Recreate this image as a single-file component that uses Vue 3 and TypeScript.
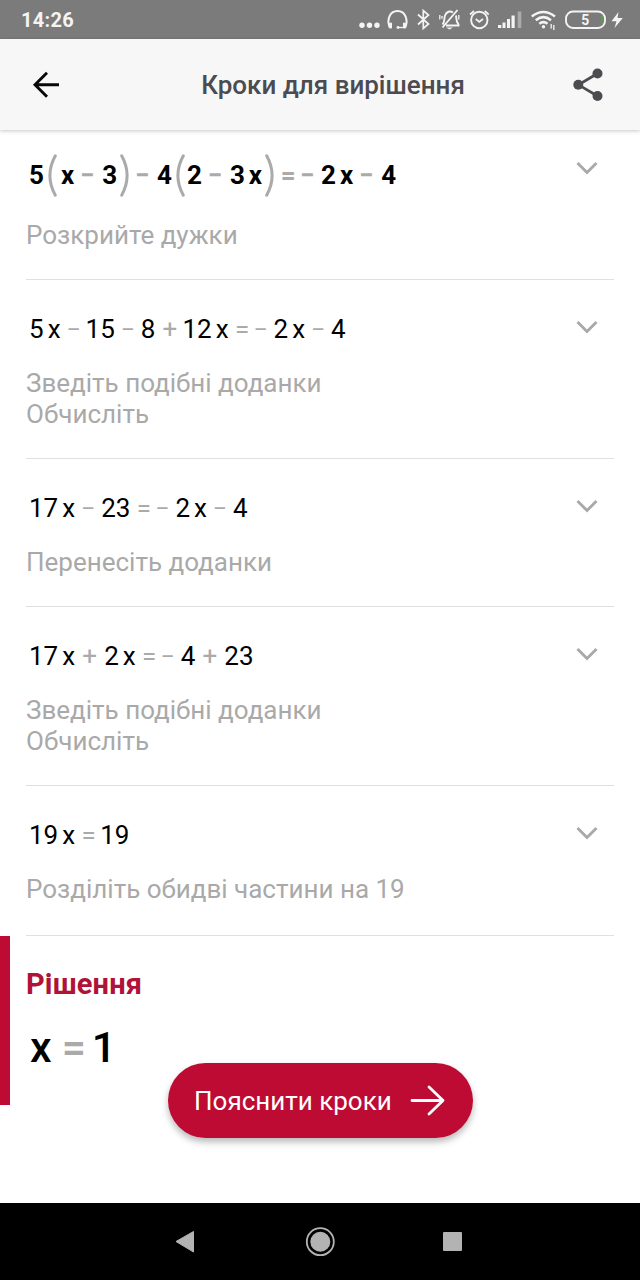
<script setup lang="ts">
type Kind = 'num' | 'var' | 'op' | 'open' | 'close'
interface Token {
  kind: Kind
  text: string
}
interface Step {
  tokens: Token[]
  notes: string[]
  strong?: boolean
}

function parse(source: string): Token[] {
  return source.split(' ').map((text): Token => {
    if (text === '(') return { kind: 'open', text }
    if (text === ')') return { kind: 'close', text }
    if (text === 'x') return { kind: 'var', text }
    if (/^\d+$/.test(text)) return { kind: 'num', text }
    return { kind: 'op', text }
  })
}

const steps: Step[] = [
  { tokens: parse('5 ( x − 3 ) − 4 ( 2 − 3 x ) = − 2 x − 4'), notes: ['Розкрийте дужки'], strong: true },
  { tokens: parse('5 x − 15 − 8 + 12 x = − 2 x − 4'), notes: ['Зведіть подібні доданки', 'Обчисліть'] },
  { tokens: parse('17 x − 23 = − 2 x − 4'), notes: ['Перенесіть доданки'] },
  { tokens: parse('17 x + 2 x = − 4 + 23'), notes: ['Зведіть подібні доданки', 'Обчисліть'] },
  { tokens: parse('19 x = 19'), notes: ['Розділіть обидві частини на 19'] },
]
</script>

<template>
  <div class="screen">
    <div class="status">
      <span class="clock">14:26</span>
      <svg class="indicators" width="290" height="39" viewBox="350 0 290 39" fill="none" stroke="#f4f4f4">
        <g fill="#f4f4f4" stroke="none">
          <circle cx="362" cy="25.3" r="2.7" />
          <circle cx="369.5" cy="25.3" r="2.7" />
          <circle cx="377" cy="25.3" r="2.7" />
        </g>
        <path d="M391 26.5H389.5C387 21 389 11 397.5 11S408 21 405.500 26.500H404" stroke-width="2" />
        <path d="M388.500 23.500L391.500 23V28H389.500ZM406.500 23.500L403.500 23V28H405.500Z" fill="#f4f4f4" stroke-width="1" />
        <circle cx="398" cy="27.500" r="1.400" fill="#f4f4f4" stroke="none" />
        <path d="M398 27.500H404" stroke-width="1.300" />
        <path d="M418 14.500L428.500 24L423.300 28.500V10.500L428.500 15L418 24.500" stroke-width="1.700" />
        <path d="M442.500 24.500C445 22 444 18 445 15.500C446.500 11.500 450 10.500 453 12.500M456 15.500C456.500 19 456 22 458.500 24.500V25.500H446M457.500 10L442.500 27.500" stroke-width="1.900" />
        <path d="M446 27.500H453L449.500 29.500Z" fill="#f4f4f4" stroke="none" />
        <path d="M439.800 15V19.500M442 16V18.800M458.800 15V19.500" stroke-width="1.300" />
        <circle cx="479.300" cy="20" r="8.200" stroke-width="1.900" />
        <path d="M475.800 19L479.300 21.800L483 19M470 14.500L474 11M488.700 14.500L484.700 11" stroke-width="1.700" />
        <g fill="#f4f4f4" stroke="none">
          <rect x="498" y="25" width="3.300" height="3" />
          <rect x="502.500" y="22.500" width="3" height="5.500" />
          <rect x="507" y="19" width="3" height="9" />
          <rect x="511.500" y="15.500" width="3.200" height="12.500" />
          <rect x="517.700" y="11.500" width="3.600" height="16.500" opacity=".4" />
        </g>
        <path d="M531.800 16.500Q543.300 7.500 555 16.500M535.800 20.300Q543.300 14 551 20.300M539.300 23.800Q543.300 20.500 547.500 23.800" stroke-width="2.500" />
        <circle cx="543.500" cy="26.800" r="1.700" fill="#f4f4f4" stroke="none" />
        <path d="M551.200 24V28.500M553.800 25V30" stroke-width="1.300" />
        <rect x="566" y="11.500" width="39" height="16.500" rx="7" stroke-width="1.900" />
        <path d="M601.800 15.500V24.500" stroke="#5f9a50" stroke-width="1.900" />
        <text class="charge" x="585.300" y="25" text-anchor="middle">5</text>
        <path d="M618.500 12L611.500 21.300H616.500L614.500 28L622.800 18H617.500Z" fill="#f4f4f4" stroke="none" />
      </svg>
    </div>

    <header class="appbar">
      <svg class="back" width="32" height="32" viewBox="30 69 32 32" fill="none" stroke="#080808" stroke-width="2.900">
        <path d="M59 84.800H35M47 72.800L35 84.800L47 96.800" />
      </svg>
      <h1>Кроки для вирішення</h1>
      <svg class="share" width="32" height="36" viewBox="572 67 32 36" fill="#4b4b50">
        <path d="M597.500 73.500L578.500 84.800L597.500 96" fill="none" stroke="#4b4b50" stroke-width="2.700" />
        <circle cx="578.300" cy="84.800" r="5" />
        <circle cx="597.500" cy="73.500" r="5" />
        <circle cx="597.500" cy="96" r="5" />
      </svg>
    </header>

    <main>
      <section v-for="(step, i) in steps" :key="i" class="step" :class="{ strong: step.strong }">
        <div class="equation">
          <template v-for="(token, t) in step.tokens" :key="t">
            <svg v-if="token.kind === 'open' || token.kind === 'close'" :class="token.kind" width="9" height="43" viewBox="0 0 9 43" fill="none" stroke="#aaa" stroke-width="3" stroke-linecap="round">
              <path v-if="token.kind === 'open'" d="M7.300 1.800Q-3.500 21.500 7.300 41.200" />
              <path v-else d="M1.700 1.800Q12.500 21.500 1.700 41.200" />
            </svg>
            <span v-else :class="[token.kind, { plus: token.text === '+', minus: token.text === '−', narrow: token.text.startsWith('1') }]">{{ token.text }}</span>
          </template>
        </div>
        <p class="notes">
          <span v-for="note in step.notes" :key="note">{{ note }}</span>
        </p>
        <svg class="chevron" width="24" height="16" viewBox="0 0 24 16" fill="none" stroke="#a9a9a9" stroke-width="2.900">
          <path d="M2.500 3L12 12.500L21.500 3" />
        </svg>
      </section>

      <section class="solution">
        <h2>Рішення</h2>
        <div class="answer"><span>x</span><span class="equals">=</span><span>1</span></div>
      </section>
      <button class="explain" type="button">
        <span>Пояснити кроки</span>
        <svg width="36" height="32" viewBox="0 0 36 32" fill="none" stroke="#fff" stroke-width="2.800" stroke-linecap="round" stroke-linejoin="round">
          <path d="M2 15.500H33M19 2L33 15.500L19 29" />
        </svg>
      </button>
    </main>

    <nav class="navbar">
      <svg width="640" height="77" viewBox="0 1203 640 77" fill="#b3b3b3">
        <path d="M176 1241.500L193.500 1231.500V1252Z" stroke="#b3b3b3" stroke-linejoin="round" />
        <circle cx="320.300" cy="1241.700" r="10" />
        <circle cx="320.300" cy="1241.700" r="13.500" fill="none" stroke="#b3b3b3" stroke-width="1.800" />
        <rect x="443" y="1232" width="19" height="19" rx="1" />
      </svg>
    </nav>
  </div>
</template>

<style>
body {
  margin: 0;
  background: #fff;
}
</style>

<style scoped>
.screen {
  width: 640px;
  height: 1280px;
  display: flex;
  flex-direction: column;
  overflow: hidden;
  background: #fff;
  font-family: Roboto, "Noto Sans", sans-serif;
}
.status {
  flex: 0 0 39px;
  display: flex;
  align-items: center;
  justify-content: space-between;
  padding-left: 21px;
  background: #7b7b7b;
  color: #f4f4f4;
}
.clock {
  font-size: 20px;
  font-weight: 700;
  line-height: 37px;
  letter-spacing: 0.3px;
  padding-top: 2px;
}
.charge {
  font: 700 14px Roboto, sans-serif;
  fill: #f4f4f4;
  stroke: none;
}
.appbar {
  flex: 0 0 91px;
  display: flex;
  align-items: center;
  justify-content: space-between;
  box-sizing: border-box;
  padding: 0 36px 0 30px;
  background: #f7f7f7;
  box-shadow: 0 1px 4px rgba(0, 0, 0, 0.22);
  z-index: 1;
}
h1 {
  margin: 0 0 0 32px;
  font-size: 26px;
  font-weight: 500;
  line-height: 32px;
  color: #4b4b50;
  white-space: nowrap;
}
main {
  flex: 1;
  position: relative;
}
.step {
  position: relative;
  box-sizing: border-box;
  margin: 0 26px;
  padding: 33px 0 28px;
  border-bottom: 1px solid #e0e0e0;
}
.step:nth-child(5) {
  padding-bottom: 30px;
}
.step.strong {
  padding-top: 29px;
}
.equation {
  display: flex;
  align-items: center;
  height: 33px;
  margin-left: 3px;
  font-size: 26px;
  line-height: 33px;
  color: #000;
}
.strong .equation {
  font-weight: 700;
}
.var {
  margin-left: 4px;
}
.op {
  width: 11px;
  margin: 0 7px 0 8px;
  display: flex;
  justify-content: center;
  color: #aaa;
}
.minus {
  position: relative;
  left: -0.5px;
  font-size: 25px;
}
.op + .op {
  margin-left: 1px;
}
.plus {
  width: 13px;
  margin: 0 8px;
}
.op + .narrow {
  margin-left: -1px;
}
.plus + .narrow {
  margin-left: -2px;
}
.strong .op {
  width: 12px;
  margin-right: 8px;
}
.strong .minus {
  left: -1px;
  font-size: 26px;
}
.strong .op + .op {
  margin-left: 0;
  margin-right: 7px;
}
.open {
  margin: 0 2px 0 4px;
}
.close {
  margin: 0 0 0 3px;
}
.open + .var {
  margin-left: 2px;
}
.notes {
  margin: 22px 0 0;
  display: flex;
  flex-direction: column;
  font-size: 26px;
  line-height: 31px;
  color: #a9a9a9;
  white-space: nowrap;
}
.strong .notes {
  margin-top: 28px;
}
.chevron {
  position: absolute;
  right: 15px;
  top: 39px;
}
.strong .chevron {
  top: 30px;
}
.solution {
  box-sizing: border-box;
  height: 169px;
  padding: 31px 0 0 16px;
  border-left: 10px solid #be0b33;
}
h2 {
  margin: 0;
  font-size: 29px;
  font-weight: 700;
  line-height: 35px;
  letter-spacing: 0.15px;
  color: #b01238;
}
.answer {
  display: flex;
  margin: 20px 0 0 4px;
  font-size: 43px;
  font-weight: 500;
  line-height: 50px;
}
.equals {
  margin: 0 6px 0 10px;
  color: #aaa;
}
.explain {
  position: absolute;
  left: 168px;
  top: 933px;
  width: 305px;
  height: 75px;
  display: flex;
  align-items: center;
  justify-content: space-between;
  padding: 0 27px 0 26px;
  border: 0;
  border-radius: 38px;
  background: #be0b33;
  box-shadow: 0 4px 7px rgba(0, 0, 0, 0.28);
  color: #fff;
  font: 400 26px/32px Roboto, sans-serif;
  white-space: nowrap;
}
.navbar {
  flex: 0 0 77px;
  background: #000;
}
svg {
  display: block;
  flex: none;
}
</style>
